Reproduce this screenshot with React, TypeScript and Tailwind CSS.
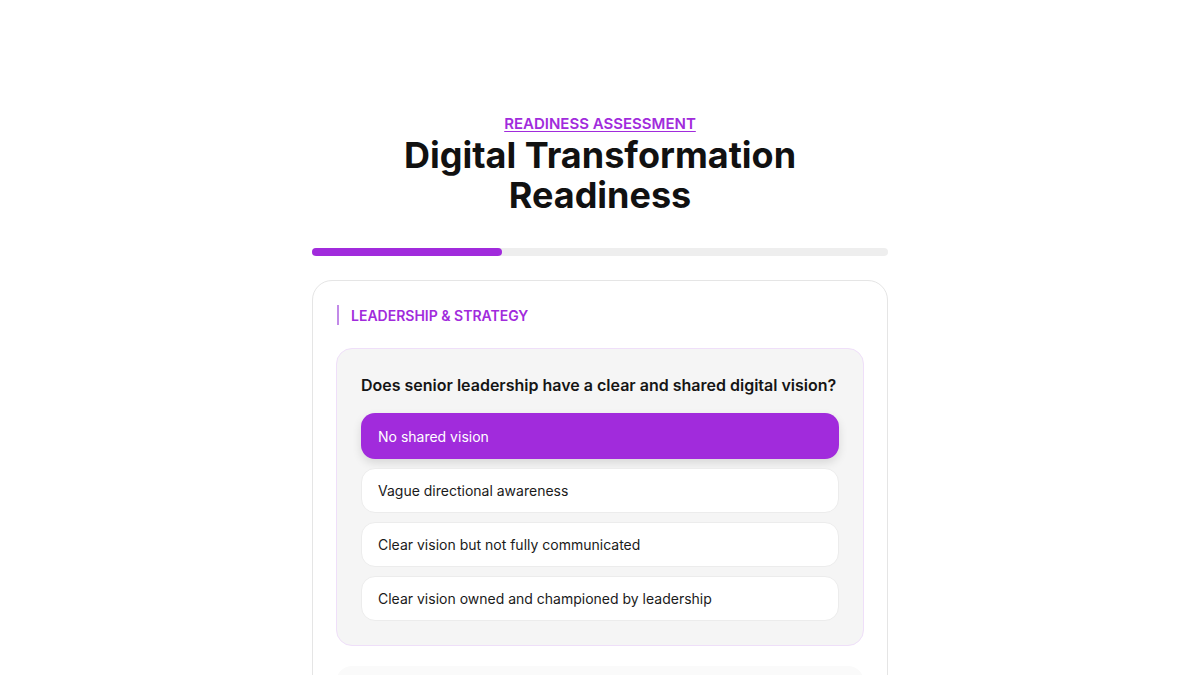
import React from "react";

const options = [
  "No shared vision",
  "Vague directional awareness",
  "Clear vision but not fully communicated",
  "Clear vision owned and championed by leadership",
];

export default function App() {
  const selected = 0;
  return (
    <div
      className="min-h-screen bg-white text-[#111111]"
      style={{ fontFamily: "Inter, 'Noto Sans', sans-serif" }}
    >
      <div className="mx-auto w-[576px] pt-[114px]">
        <div className="text-center">
          <div className="text-[15px] font-semibold uppercase text-[#a12bdc] underline underline-offset-2 leading-[20px]">
            Readiness Assessment
          </div>
          <h1 className="mt-[1px] text-[36px] font-bold leading-[40px] text-[#111111]">
            Digital Transformation
            <br />
            Readiness
          </h1>
        </div>
        <div className="mt-[33px] h-[8px] w-full rounded-full bg-[#eeeeee]">
          <div className="h-full w-[33%] rounded-full bg-[#a12bdc]" />
        </div>
        <div className="mt-[24px] rounded-[20px] border border-[#e5e5e5] bg-white px-[23px] pt-[24px]">
          <div className="ml-[1px] flex h-[20px] items-center border-l-2 border-[#c28ae8] pl-[12px] text-[14px] font-semibold uppercase text-[#a12bdc]">
            Leadership &amp; Strategy
          </div>
          <div className="mt-[23px] rounded-[16px] border border-[#efdff9] bg-[#f5f5f5] px-[24px] pb-[24px] pt-[24px]">
            <div className="text-[16px] font-semibold leading-[24px] text-[#151515]">
              Does senior leadership have a clear and shared digital vision?
            </div>
            <div className="mt-[16px] flex flex-col gap-[9px]">
              {options.map((o, i) => (
                <div
                  key={o}
                  className={
                    i === selected
                      ? "flex h-[46px] items-center rounded-[14px] bg-[#a12bdc] px-[17px] text-[14px] text-white shadow-[0_4px_10px_rgba(0,0,0,0.12)]"
                      : "flex h-[45px] items-center rounded-[14px] border border-[#ececec] bg-white px-[16px] text-[14px] text-[#1a1a1a]"
                  }
                >
                  {o}
                </div>
              ))}
            </div>
          </div>
          <div className="mt-[20px] h-[60px] rounded-t-[16px] bg-[#fafafa]" />
        </div>
      </div>
    </div>
  );
}
